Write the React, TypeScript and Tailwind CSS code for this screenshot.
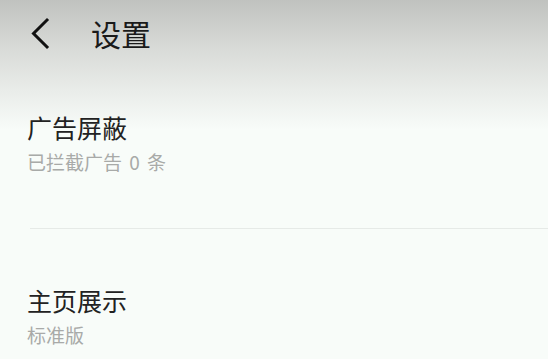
const font = { fontFamily: '"Noto Sans CJK SC", "Noto Sans", sans-serif' };

function BackIcon() {
  return (
    <svg width="24" height="34" viewBox="0 0 24 34" fill="none" className="block">
      <path d="M17 4 L3.5 17.5 L17 31" stroke="#111" strokeWidth="3" strokeLinecap="square" strokeLinejoin="miter" />
    </svg>
  );
}

function SettingItem({ title, sub, className }: { title: string; sub: string; className?: string }) {
  return (
    <div className={className}>
      <div className="text-[25px] leading-[25px] text-[#222]">{title}</div>
      <div className="mt-[12px] text-[19px] leading-[19px] text-[#a8aaa8] [word-spacing:3px]">{sub}</div>
    </div>
  );
}

export default function App() {
  return (
    <div style={font} className="h-[359px] w-[548px] overflow-hidden bg-[#f8fcf9] bg-[linear-gradient(to_bottom,#c0c2bf_0px,#d7d9d6_45px,#e9ece9_90px,#f8fcf9_130px)]">
      <header className="flex h-[70px] items-center pb-[4px]">
        <div className="ml-[30px] w-[61px]">
          <BackIcon />
        </div>
        <h1 className="text-[30px] leading-none text-[#1a1a1a]">设置</h1>
      </header>
      <SettingItem className="pl-[27px] pt-[45px] pb-[57px]" title="广告屏蔽" sub="已拦截广告 0 条" />
      <div className="ml-[30px] h-px bg-[#e6eae7]" />
      <SettingItem className="pl-[27px] pt-[59px]" title="主页展示" sub="标准版" />
    </div>
  );
}
